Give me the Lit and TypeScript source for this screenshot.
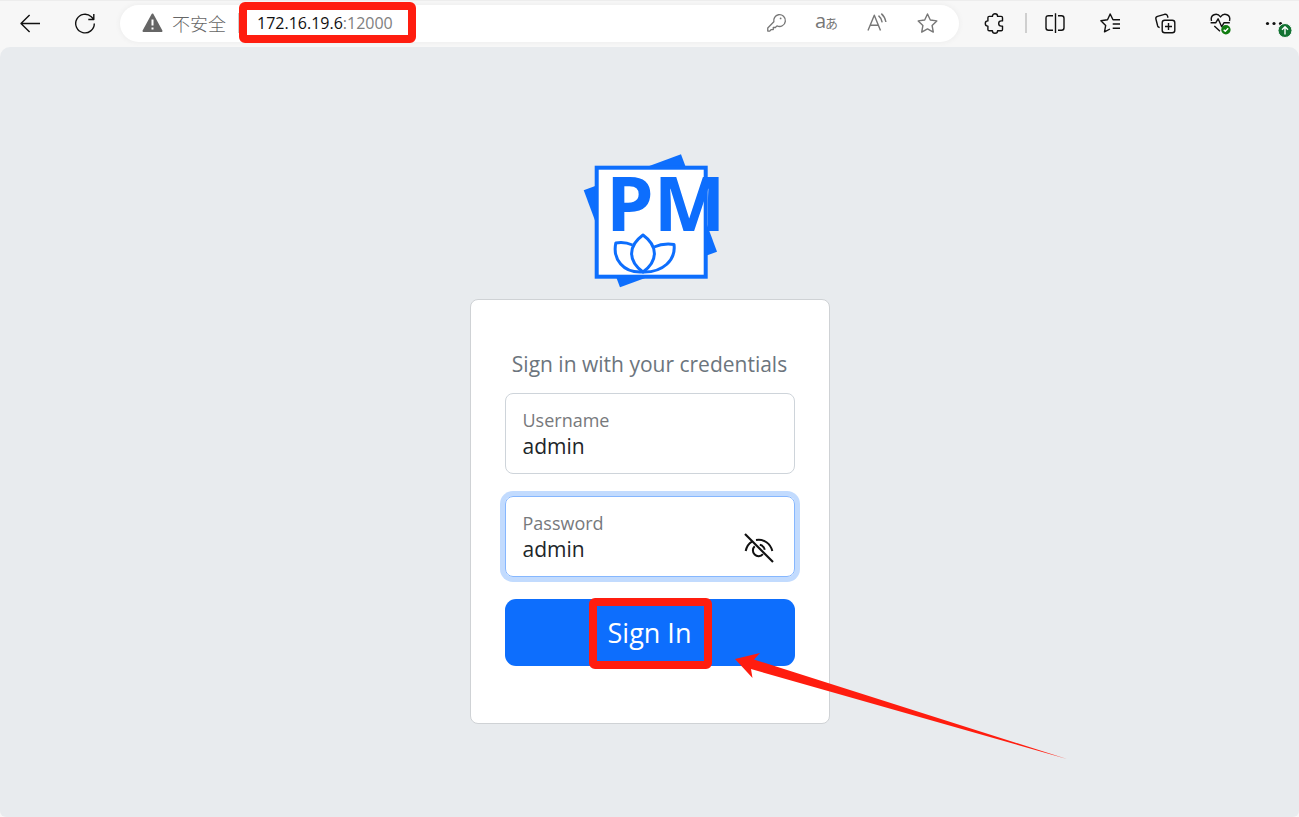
import { LitElement, html, css, svg } from "lit";
import { customElement, state } from "lit/decorators.js";

const icons = {
  back: svg`<path d="M20 10.500H1.200M9.600 2 1 10.500l8.600 8.500"/>`,
  reload: svg`<path d="M19.300 10.500a9.300 9.300 0 1 1-3-6.800l2.400 2.600M18.800 1v5.500h-5.500"/>`,
  key: svg`<circle cx="13.600" cy="5.400" r="0.900" fill="currentColor" stroke="none"/><path d="M12 .8a6.200 6.200 0 1 1-1.500 11.700l-1.700 1.700H6.600v2.200H4.500L2.900 18H.8v-3.300l6.400-6.500A6.200 6.200 0 0 1 12 .8Z" transform="translate(0 1) scale(.95)"/>`,
  read: svg`<path d="M1 17.500 7.300 2.200l6.200 15.300M3.200 12.200h8.200M11.500 2.600c2 1.700 3.300 4 3.700 6.700M14.300.6c2.500 2.200 4 5 4.600 8.400"/>`,
  star: svg`<path d="m10.500 1 2.800 6 6.500.9-4.700 4.600 1.200 6.600-5.800-3.200-5.800 3.200 1.200-6.600L1.200 7.900 7.700 7Z"/>`,
  puzzle: svg`<path d="M4.200 3.400h3.200a2.600 2.600 0 0 1 5.200 0h3.600q1.300 0 1.300 1.300v3.200h-1.200a2.500 2.500 0 0 0 0 5.200h1.200v3.300q0 1.300-1.300 1.300h-3.600a2.600 2.600 0 0 1-5.200 0H4.200q-1.300 0-1.300-1.300v-3.300a2.600 2.600 0 0 1 0-5.200V4.700q0-1.300 1.300-1.300Z"/>`,
  split: svg`<path d="M8 2.700H3.500Q1 2.700 1 5.200v9.600q0 2.500 2.500 2.500H8M13 2.700h3.500q2.500 0 2.500 2.500v9.600q0 2.500-2.500 2.500H13M10.500.3v19.700"/>`,
  favorites: svg`<path d="M13 6.800 10.200 1 7.500 6.800.9 7.700l4.800 4.700-1.200 6.500 5.500-2.900M12.700 6.800H20M12.700 11H20M12.700 15.200H20"/>`,
  collections: svg`<rect x="7.200" y="7.200" width="12.600" height="12.600" rx="2.500"/><path d="M13.500 10v7M10 13.500h7M4.700 14.500l-1-.4Q2.900 13.700 2.700 13L.9 6Q.4 3.900 2.500 3.300L9.600 1.300q2.200-.5 2.900 1.600l.5 1.800"/>`,
  health: svg`<path d="M1.500 8C-.2 1.500 7-.8 10.500 3.900 14-.8 21.200 1.500 19.500 8M4.300 13l5.700 5.300M.6 9.800h5.100l2.400-4 3.600 8 2.200-4h5.900"/><circle cx="15.900" cy="16.700" r="4.700" fill="#107c10" stroke="none"/><path d="m13.700 16.700 1.600 1.600 2.900-3" stroke="#fff"/>`,
};

@customElement("browser-bar")
class BrowserBar extends LitElement {
  static styles = css`
    :host {
      display: block;
    }
    .bar {
      display: flex;
      align-items: center;
      height: 47px;
      box-sizing: border-box;
      padding: 0 7px 2px 20px;
      background: #f7f7f7;
      border-top: 1px solid #ededed;
      font-family: "Open Sans", "Noto Sans CJK SC", sans-serif;
    }
    button {
      display: flex;
      flex: none;
      padding: 0;
      border: 0;
      background: none;
      color: #111;
    }
    svg {
      display: block;
      overflow: visible;
      fill: none;
      stroke: currentColor;
      stroke-width: 1.4;
      stroke-linejoin: round;
    }
    .nav {
      display: flex;
      gap: 34px;
      margin-right: 24px;
    }
    .address {
      display: flex;
      flex: 1;
      align-items: center;
      height: 37px;
      padding: 0 21px 0 22px;
      border-radius: 19px;
      background: #fff;
      box-shadow: 0 0 4px 1px #eeeeee;
    }
    .security {
      gap: 9px;
      align-items: center;
      color: #666;
      font: 300 18px/24px "Noto Sans CJK SC", sans-serif;
    }
    .rule {
      width: 2px;
      height: 20px;
      background: #cfcfcf;
    }
    .address .rule {
      margin: 0 17px 0 12px;
    }
    .url {
      position: relative;
      color: #111;
      font-size: 16px;
      line-height: 24px;
    }
    .port {
      color: #808080;
    }
    .highlight {
      position: absolute;
      inset: -9px -23px -8px -18px;
      border: 8px solid #ff1d0f;
      border-radius: 6px;
    }
    .actions {
      display: flex;
      align-items: center;
      gap: 29px;
      margin-left: auto;
    }
    .actions button {
      color: #777;
    }
    .kana {
      fill: #777;
      stroke: none;
      font-family: "Open Sans", "Noto Sans CJK JP", sans-serif;
    }
    .tools {
      display: flex;
      align-items: center;
      gap: 34px;
      margin-left: 26px;
    }
    .extension {
      display: flex;
      align-items: center;
      gap: 19px;
    }
    .extension + button {
      margin-left: -16px;
    }
  `;

  private icon(shape: unknown, label: string) {
    return html`<button aria-label=${label}>
      <svg width="21" height="21" viewBox="0 0 21 21">${shape}</svg>
    </button>`;
  }

  render() {
    return html`<header class="bar">
      <div class="nav">
        ${this.icon(icons.back, "Back")} ${this.icon(icons.reload, "Reload")}
      </div>
      <div class="address">
        <button class="security">
          <svg width="21" height="20" viewBox="0 0 21 20">
            <path d="M10.500 1.500 19.500 18H1.500Z" fill="#666" stroke="#666" stroke-width="2"/>
            <path d="M10.500 6.500v6M10.500 14.500v2" stroke="#fff" stroke-width="2"/>
          </svg>
          不安全
        </button>
        <span class="rule"></span>
        <span class="url">172.16.19.6<span class="port">:12000</span><span class="highlight"></span></span>
        <div class="actions">
          <button aria-label="Saved passwords">
            <svg width="20" height="20" viewBox="0 0 20 20">${icons.key}</svg>
          </button>
          <button aria-label="Translate">
            <svg width="22" height="20" viewBox="0 0 22 20">
              <text class="kana" x="-1" y="15" font-size="20">a</text>
              <text class="kana" x="9" y="15" font-size="13">あ</text>
            </svg>
          </button>
          ${this.icon(icons.read, "Read aloud")} ${this.icon(icons.star, "Add to favorites")}
        </div>
      </div>
      <div class="tools">
        <div class="extension">
          ${this.icon(icons.puzzle, "Extensions")}<span class="rule"></span>
        </div>
        ${this.icon(icons.split, "Split screen")} ${this.icon(icons.favorites, "Favorites")}
        ${this.icon(icons.collections, "Collections")} ${this.icon(icons.health, "Browser essentials")}
        <button aria-label="Settings and more">
          <svg width="27" height="21" viewBox="0 0 27 21">
            <g fill="#111" stroke="none">
              <circle cx="2.500" cy="10.500" r="1.600"/><circle cx="9" cy="10.500" r="1.600"/><circle cx="15.500" cy="10.500" r="1.600"/>
            </g>
            <circle cx="20" cy="17.500" r="7" fill="#137333" stroke="#f7f7f7" stroke-width="1"/>
            <path d="M20 21.500V14M17 16.800l3-3 3 3" stroke="#fff"/>
          </svg>
        </button>
      </div>
    </header>`;
  }
}

@customElement("login-card")
class LoginCard extends LitElement {
  @state() private revealed = true;

  static styles = css`
    :host {
      display: block;
    }
    .card {
      box-sizing: border-box;
      width: 360px;
      padding: 48px 34px 57px;
      border: 1px solid #cfd2d5;
      border-radius: 8px;
      background: #fff;
      color: #212529;
      font-family: "Open Sans", sans-serif;
    }
    .title {
      margin: 0 0 12px;
      color: #6c757d;
      font-size: 21px;
      font-weight: 400;
      line-height: 33px;
      text-align: center;
      white-space: nowrap;
    }
    .field {
      display: flex;
      align-items: flex-end;
      height: 81px;
      box-sizing: border-box;
      margin-bottom: 22px;
      padding: 13px 20px 13px 17px;
      border: 1px solid #ced4da;
      border-radius: 8px;
    }
    .active {
      border-color: #86b7fe;
      box-shadow: 0 0 0 5px #c2dbfe;
    }
    .entry {
      display: flex;
      flex: 1;
      flex-direction: column;
      min-width: 0;
    }
    label {
      color: #77797c;
      font-size: 18px;
      line-height: 24px;
    }
    input {
      width: 100%;
      box-sizing: border-box;
      padding: 0;
      border: 0;
      outline: 0;
      background: none;
      color: #212529;
      font: 21px/28px "Open Sans", sans-serif;
    }
    .reveal {
      display: flex;
      padding: 0;
      border: 0;
      background: none;
      color: #111;
    }
    .submit-row {
      position: relative;
    }
    .submit {
      display: block;
      width: 100%;
      height: 67px;
      border: 0;
      border-radius: 11px;
      background: #0d6efd;
      color: #fff;
      font: 27px/40px "Open Sans", sans-serif;
    }
    .highlight {
      position: absolute;
      inset: -1px 83px -3px 84px;
      border: 8px solid #ff1d0f;
      border-radius: 6px;
      pointer-events: none;
    }
    .arrow {
      position: absolute;
      left: 230px;
      top: 54px;
      pointer-events: none;
    }
  `;

  render() {
    return html`<form class="card" @submit=${(e: Event) => e.preventDefault()}>
      <h1 class="title">Sign in with your credentials</h1>
      <div class="field">
        <div class="entry">
          <label for="username">Username</label>
          <input id="username" type="text" value="admin" />
        </div>
      </div>
      <div class="field active">
        <div class="entry">
          <label for="password">Password</label>
          <input id="password" type=${this.revealed ? "text" : "password"} value="admin" />
        </div>
        <button
          class="reveal"
          type="button"
          aria-label="Toggle password visibility"
          @click=${() => (this.revealed = !this.revealed)}
        >
          <svg width="30" height="30" viewBox="0 0 30 30" fill="none" stroke="currentColor" stroke-width="2">
            <path d="M1.700 18C2.500 14 4.500 10.600 8 8.600M12 7.100c8-1.400 14.500 3.500 16.300 10.900"/>
            <path d="M10.700 13.300a5.700 5.700 0 1 0 8.200 7.900M15.800 11.800q4 .8 5 5"/>
            <path d="m1 1 28 28" stroke-width="2.200"/>
          </svg>
        </button>
      </div>
      <div class="submit-row">
        <button class="submit" type="submit">Sign In</button>
        <span class="highlight"></span>
        <svg class="arrow" width="332" height="106" viewBox="0 0 332 106" fill="#ff1d0f">
          <path d="M0 6 25 0l-6 6.500L332 106 16 16l1.500 9Z"/>
        </svg>
      </div>
    </form>`;
  }
}

@customElement("app-root")
class AppRoot extends LitElement {
  static styles = css`
    :host {
      display: flex;
      flex-direction: column;
      min-height: 100vh;
      background: #f7f7f7;
    }
    .page {
      display: flex;
      flex: 1;
      flex-direction: column;
      align-items: center;
      gap: 8px;
      padding: 104px 0 48px;
      box-sizing: border-box;
      border-radius: 10px 10px 6px 6px;
      background: #e8ebee;
    }
    .logo {
      display: block;
      overflow: visible;
      fill: #0d6efd;
      font: 700 76px "Open Sans", sans-serif;
    }
    .lotus {
      fill: none;
      stroke: #0d6efd;
      stroke-width: 3px;
      stroke-linejoin: round;
    }
  `;

  render() {
    return html`<browser-bar></browser-bar>
      <main class="page">
        <svg class="logo" width="140" height="140" viewBox="0 0 140 140" role="img" aria-label="PM">
          <path d="M3.700 39.300 101 3.300l36 97.400-97 35.600Z"/>
          <rect x="16.700" y="16.700" width="109" height="109" fill="#fff" stroke="#0d6efd" stroke-width="4"/>
          <text x="26" y="80">PM</text>
          <g class="lotus">
            <path d="M63 84C47.800 95 47.800 110 63 121 78.200 110 78.200 95 63 84Z"/>
            <path d="M52.500 94Q44.500 90.500 35.800 92C32.500 108 43 122.500 63 121"/>
            <path d="M74 96Q83 92 94 93.500C96 109 83 121.500 63 121"/>
          </g>
        </svg>
        <login-card></login-card>
      </main>`;
  }
}
